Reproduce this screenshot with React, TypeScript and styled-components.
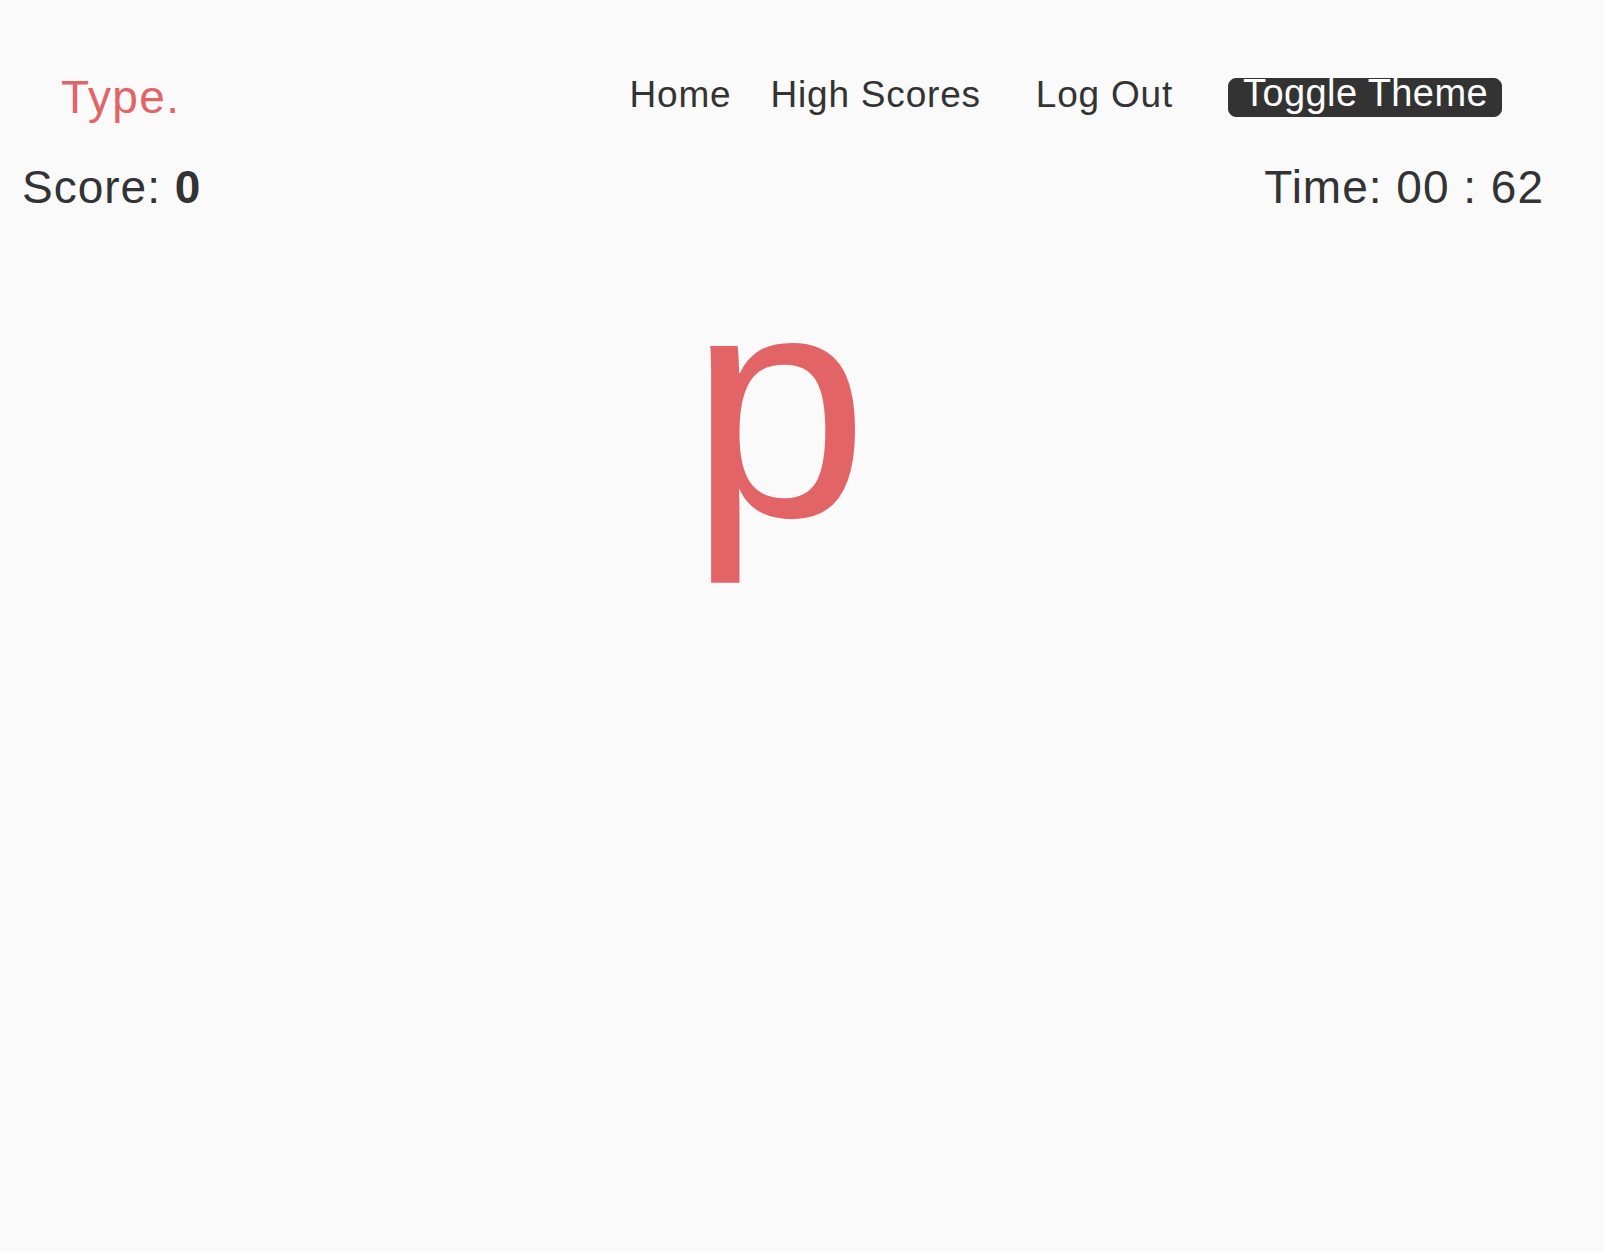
import React from 'react';
import styled, { createGlobalStyle } from 'styled-components';

const COLORS = {
  BG: '#fafafa',
  TEXT: '#333333',
  RED: '#e36466',
  WHITE: '#ffffff',
};

const GlobalStyle = createGlobalStyle`
  html, body {
    margin: 0;
    padding: 0;
    background: ${COLORS.BG};
    font-family: 'Liberation Sans', Arial, Helvetica, sans-serif;
    color: ${COLORS.TEXT};
  }
  #root {
    min-height: 100vh;
    background: ${COLORS.BG};
  }
`;

export const Page = styled.div`
  min-height: 100vh;
  display: flex;
  flex-direction: column;
`;

export const Header = styled.header`
  display: flex;
  flex-direction: row;
  align-items: flex-start;
  padding: 74px 102px 0 61px;
`;

export const Logo = styled.a`
  color: ${COLORS.RED};
  font-size: 46px;
  line-height: 46px;
  letter-spacing: 1.4px;
  text-decoration: none;
`;

export const Nav = styled.nav`
  display: flex;
  flex-direction: row;
  align-items: flex-start;
  margin-left: auto;
`;

export const NavLink = styled.a<{ $space?: number }>`
  color: ${COLORS.TEXT};
  font-size: 37px;
  line-height: 37px;
  letter-spacing: 0.8px;
  margin-top: 2px;
  margin-right: ${(p) => p.$space ?? 0}px;
  text-decoration: none;
  white-space: nowrap;
`;

export const ThemeButton = styled.button`
  background: ${COLORS.TEXT};
  color: ${COLORS.WHITE};
  font-family: 'Liberation Sans', Arial, Helvetica, sans-serif;
  font-size: 38px;
  line-height: 29px;
  letter-spacing: 0.4px;
  margin-top: 4px;
  padding: 0 13px 8px 14px;
  border: 1px solid ${COLORS.TEXT};
  border-radius: 8px;
  white-space: nowrap;
  cursor: pointer;
`;

export const StatsRow = styled.div`
  display: flex;
  flex-direction: row;
  justify-content: space-between;
  margin-top: 40px;
  padding: 0 60px 0 22px;
  font-size: 46px;
  line-height: 54px;
  letter-spacing: 1px;
`;

export const Stat = styled.div`
  white-space: nowrap;
`;

export const Stage = styled.main`
  display: flex;
  justify-content: center;
  margin-top: 31px;
  padding-right: 46px;
`;

export const Letter = styled.span`
  color: ${COLORS.RED};
  font-size: 322px;
  line-height: 320px;
`;

export default function App() {
  return (
    <Page>
      <GlobalStyle />
      <Header>
        <Logo href="#">Type.</Logo>
        <Nav>
          <NavLink href="#" $space={39}>Home</NavLink>
          <NavLink href="#" $space={55}>High Scores</NavLink>
          <NavLink href="#" $space={55}>Log Out</NavLink>
          <ThemeButton>Toggle Theme</ThemeButton>
        </Nav>
      </Header>
      <StatsRow>
        <Stat>Score: <b>0</b></Stat>
        <Stat>Time: 00 : 62</Stat>
      </StatsRow>
      <Stage>
        <Letter>p</Letter>
      </Stage>
    </Page>
  );
}
